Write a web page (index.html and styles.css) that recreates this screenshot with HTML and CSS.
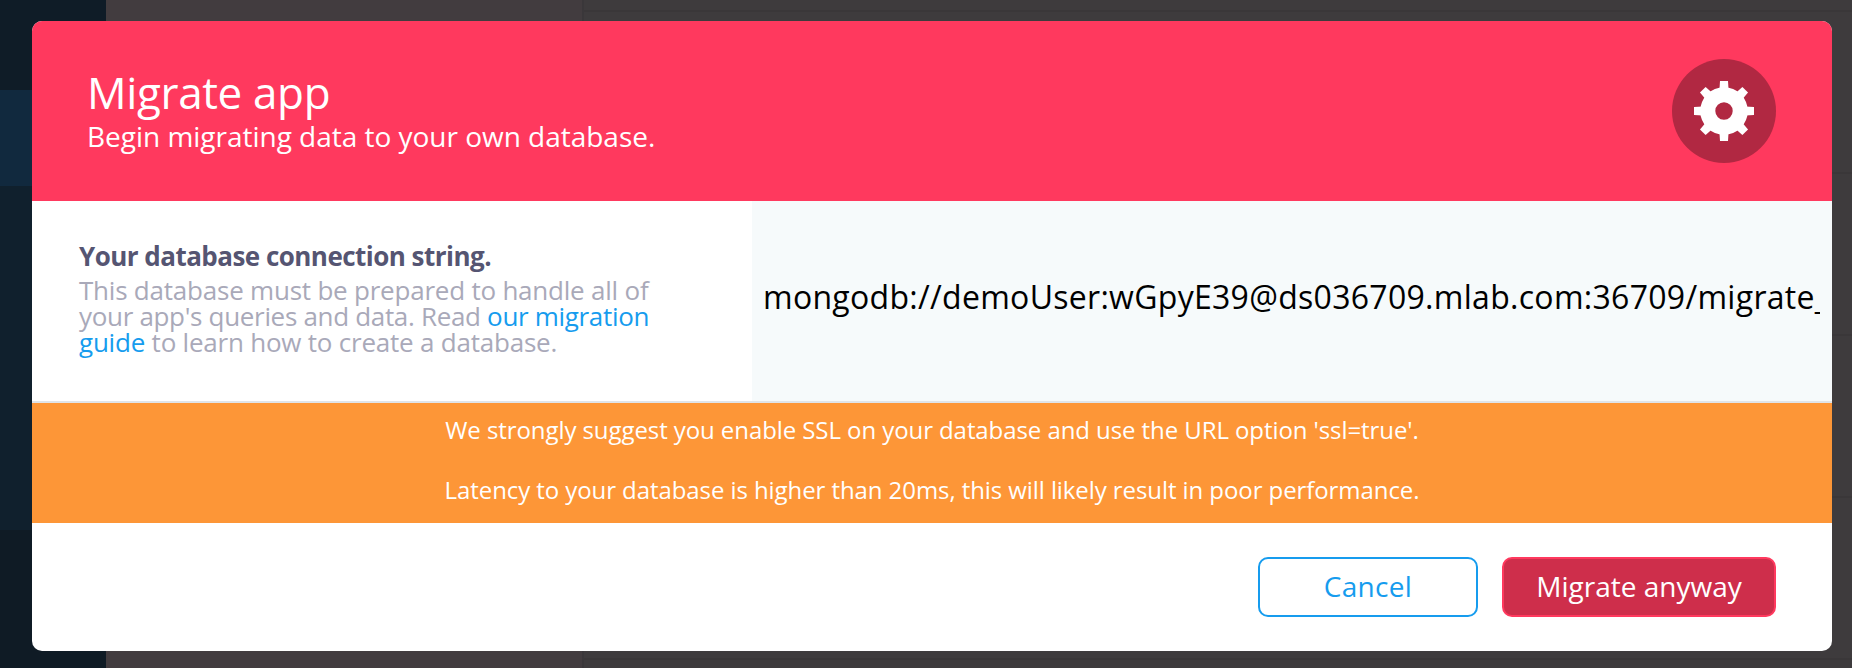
FILE: index.html
```html
<!DOCTYPE html>
<html lang="en">
<head>
<meta charset="utf-8">
<title>Migrate app</title>
<link rel="stylesheet" href="styles.css">
</head>
<body>
<div class="backdrop" aria-hidden="true">
  <div class="sidebar">
    <div class="side-top"></div>
    <div class="side-active"></div>
    <div class="side-menu"></div>
    <div class="side-bottom"></div>
  </div>
  <div class="subnav"></div>
  <div class="content">
    <div class="row row-first"></div>
    <div class="row"></div>
    <div class="row"></div>
    <div class="row"></div>
    <div class="row"></div>
  </div>
</div>
<div class="overlay">
  <section class="modal" role="dialog" aria-labelledby="title">
    <header class="header">
      <div>
        <h1 class="title" id="title">Migrate app</h1>
        <p class="subtitle">Begin migrating data to your own database.</p>
      </div>
      <div class="badge">
        <svg class="gear" viewBox="-30 -30 60 60" aria-hidden="true">
          <defs><path id="tooth" d="M-4-30H4L4.6-21H-4.6Z"/></defs>
          <g fill="#fff">
            <path fill-rule="evenodd" d="M-23.8 0A23.8 23.8 0 1 1 23.8 0A23.8 23.8 0 1 1-23.8 0ZM-8.7 0A8.7 8.7 0 1 0 8.7 0A8.7 8.7 0 1 0-8.7 0Z"/>
            <use href="#tooth"/>
            <use href="#tooth" transform="rotate(45)"/>
            <use href="#tooth" transform="rotate(90)"/>
            <use href="#tooth" transform="rotate(135)"/>
            <use href="#tooth" transform="rotate(180)"/>
            <use href="#tooth" transform="rotate(225)"/>
            <use href="#tooth" transform="rotate(270)"/>
            <use href="#tooth" transform="rotate(315)"/>
          </g>
        </svg>
      </div>
    </header>
    <div class="field">
      <div class="label">
        <h2 class="label-title">Your database connection string.</h2>
        <p class="label-text">This database must be prepared to handle all of<br><span class="tight">your app's queries and data. Read <a class="link">our migration</a></span><br><a class="link">guide</a> to learn how to create a database.</p>
      </div>
      <div class="input"><div class="value">mongodb://demoUser:wGpyE39@ds036709.mlab.com:36709/migrate_</div></div>
    </div>
    <div class="warnings">
      <p class="warning">We strongly suggest you enable SSL on your database and use the URL option 'ssl=true'.</p>
      <p class="warning">Latency to your database is higher than 20ms, this will likely result in poor performance.</p>
    </div>
    <footer class="footer">
      <button class="button cancel">Cancel</button>
      <button class="button confirm">Migrate anyway</button>
    </footer>
  </section>
</div>
</body>
</html>
```
FILE: styles.css
```css
* { box-sizing: border-box; }
body { margin: 0; height: 668px; overflow: hidden; font-family: "Open Sans", "Noto Sans", sans-serif; }
h1, h2, p { margin: 0; }

.backdrop { display: flex; height: 668px; background: #3e3b3d; }
.sidebar { width: 106px; display: flex; flex-direction: column; }
.side-top { height: 90px; background: #0f1c27; }
.side-active { height: 96px; background: #11293e; }
.side-menu { height: 344px; background: #10202d; }
.side-bottom { flex: 1; background: #0f1b25; }
.subnav { width: 478px; background: #423c3f; border-right: 2px solid #3a373a; }
.content { flex: 1; overflow: hidden; }
.row { height: 162px; border-bottom: 2px solid #3a3739; }
.row-first { height: 12px; }

.overlay { position: absolute; inset: 0; padding: 21px 20px 17px 32px; }
.modal { height: 630px; border-radius: 10px; overflow: hidden; background: #fff; }

.header { height: 180px; padding: 38px 56px 0 55px; display: flex; justify-content: space-between; background: #ff395e; color: #fff; }
.title { margin-top: 11px; font-size: 44px; line-height: 44px; font-weight: 400; letter-spacing: -.35px; }
.subtitle { margin-top: 6px; font-size: 28px; line-height: 32px; letter-spacing: -.02px; }
.badge { width: 104px; height: 104px; border-radius: 50%; background: #b12842; display: flex; align-items: center; justify-content: center; }
.gear { width: 60px; height: 60px; }

.field { height: 202px; display: flex; border-bottom: 2px solid #e0e4e8; }
.label { width: 720px; padding: 42px 0 0 47px; font-size: 26px; line-height: 26px; white-space: nowrap; }
.label-title { font-size: 26px; font-weight: 700; letter-spacing: -.53px; color: #555572; }
.label-text { margin-top: 8px; letter-spacing: -.22px; color: #a9a9b9; }
.tight { letter-spacing: -.32px; }
.link { color: #169cee; }
.input { flex: 1; min-width: 0; padding: 0 12px 0 11px; background: #f6fafb; }
.value { overflow: hidden; white-space: nowrap; font-size: 32px; line-height: 192px; letter-spacing: .29px; color: #000; }

.warnings { height: 120px; background: #fd9637; color: #fff; text-align: center; }
.warning { height: 60px; font-size: 24px; line-height: 54px; letter-spacing: -.08px; }

.footer { display: flex; justify-content: flex-end; gap: 24px; padding: 34px 56px 0 0; }
.button { height: 60px; padding: 0 0 2px; border-radius: 10px; border: 2px solid #169cee; font: 400 28px "Open Sans", "Noto Sans", sans-serif; }
.cancel { width: 220px; background: #fff; color: #169cee; letter-spacing: .3px; }
.confirm { width: 274px; background: #ce2e4b; border-color: #ff395e; color: #fff; }
```
